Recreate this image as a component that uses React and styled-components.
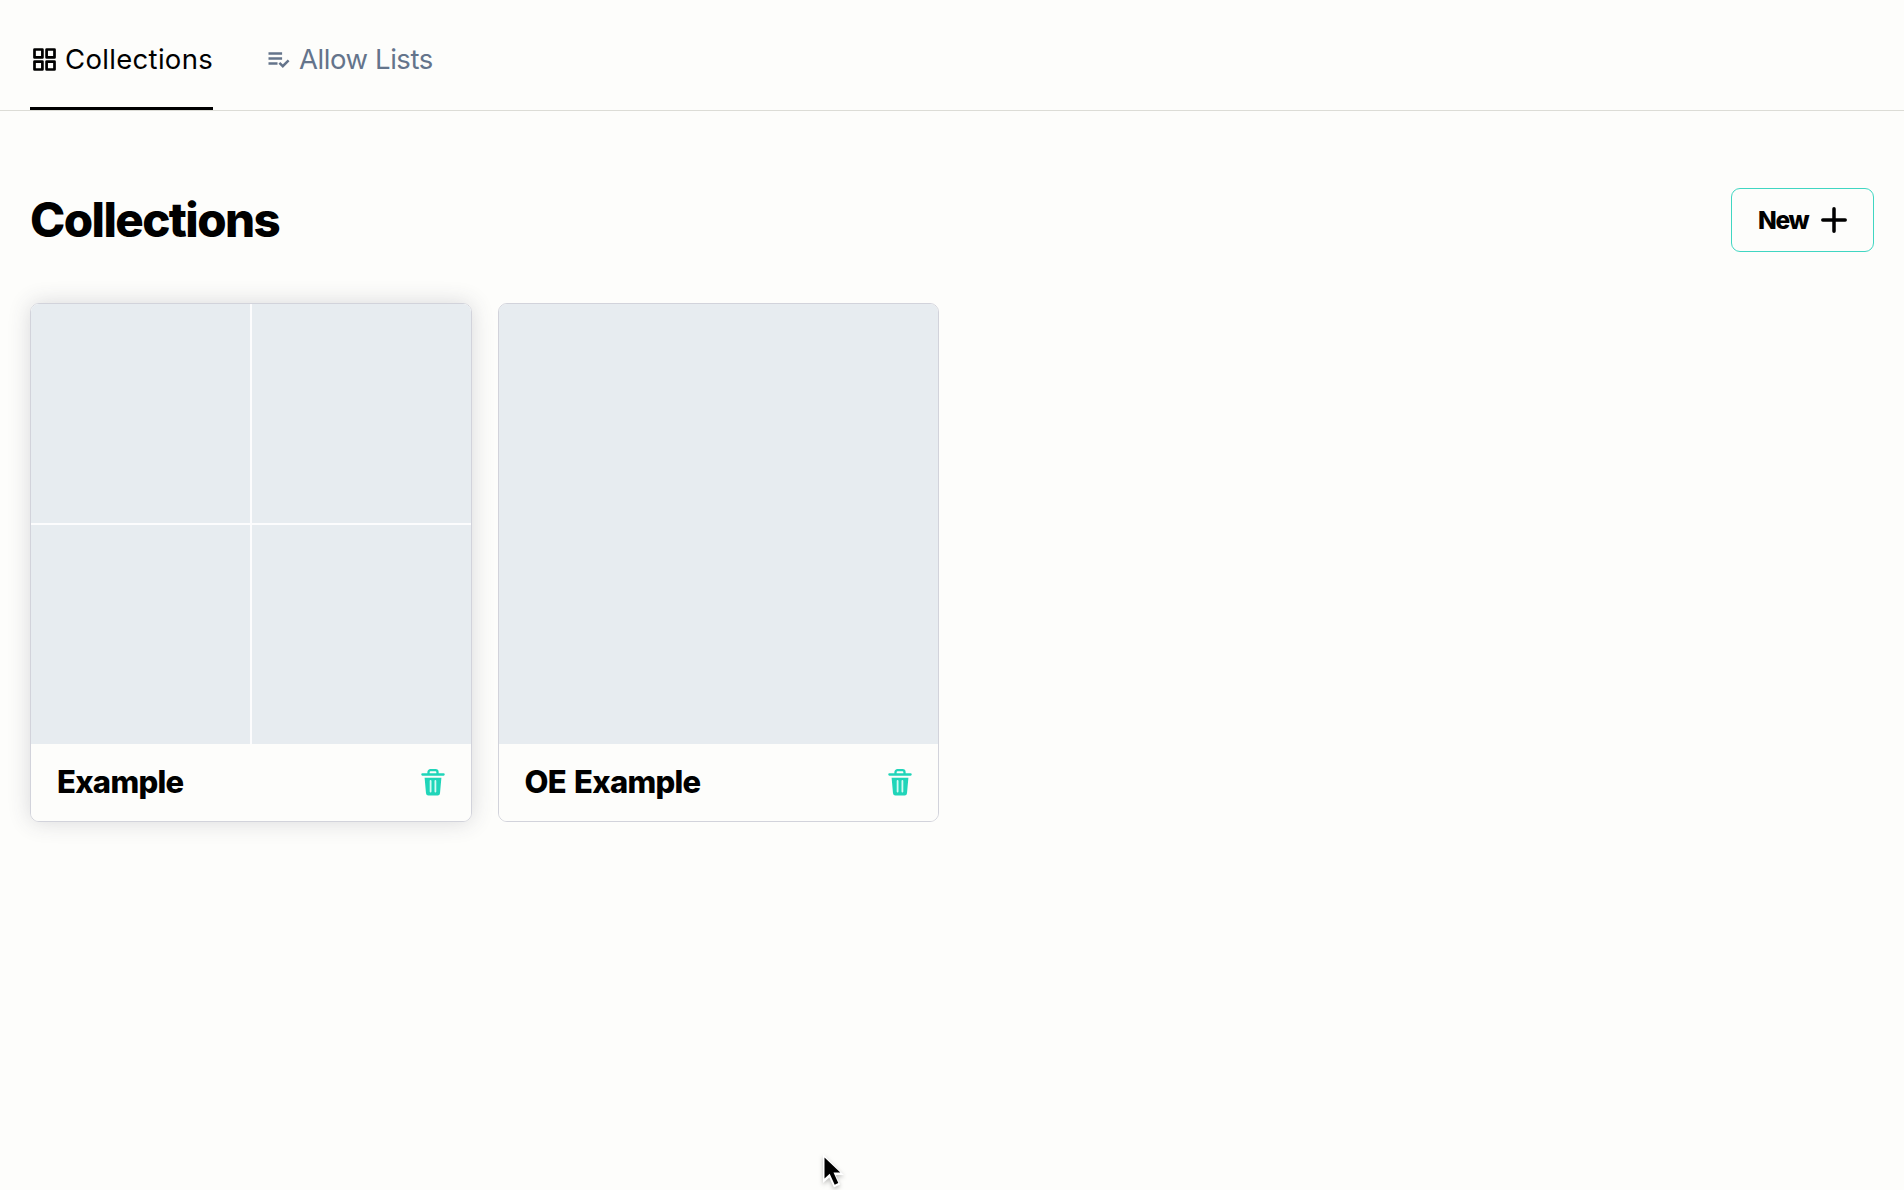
import React from "react";
import styled, { createGlobalStyle } from "styled-components";

const GlobalStyle = createGlobalStyle`
  * { box-sizing: border-box; }
  body {
    margin: 0;
    background: #fdfdfb;
    color: #000;
    font-family: Inter, "Liberation Sans", sans-serif;
    overflow: hidden;
  }
`;

const Page = styled.div`
  min-height: 100vh;
`;

const Nav = styled.nav`
  display: flex;
  gap: 54px;
  height: 111px;
  padding: 0 30px;
  border-bottom: 1px solid #dcdcd6;
`;

const Tab = styled.a`
  display: flex;
  align-items: center;
  gap: 9px;
  width: ${(p) => p.$width}px;
  height: 110px;
  padding: 12px 0 0 ${(p) => (p.$active ? 3 : 1)}px;
  border-bottom: 3px solid ${(p) => (p.$active ? "#000" : "transparent")};
  color: ${(p) => (p.$active ? "#000" : "#64748b")};
  font-size: 27.5px;
  letter-spacing: ${(p) => p.$tracking}px;
  line-height: 34px;
  white-space: nowrap;
  svg { flex: none; }
`;

const TabLabel = styled.span`
  padding-bottom: 2px;
`;

const Main = styled.main`
  padding: 77px 30px 0;
`;

const TitleRow = styled.div`
  display: flex;
  justify-content: space-between;
  align-items: center;
  height: 64px;
`;

const Title = styled.h1`
  margin: 0;
  font-size: 47.5px;
  font-weight: 800;
  line-height: 60px;
  letter-spacing: -1.6px;
`;

const NewButton = styled.button`
  display: flex;
  align-items: center;
  justify-content: space-between;
  width: 143px;
  height: 64px;
  padding: 0 26px 0 26px;
  border: 1.5px solid #40d6c2;
  border-radius: 9px;
  background: transparent;
  color: #000;
  font: 800 24.5px/30px Inter, "Liberation Sans", sans-serif;
  letter-spacing: -1.3px;
`;

const Grid = styled.div`
  display: grid;
  grid-template-columns: repeat(4, 1fr);
  gap: 26px;
  margin-top: 51px;
`;

const Card = styled.article`
  height: 519px;
  border: 1px solid #d2d3db;
  border-radius: 9px;
  overflow: hidden;
  box-shadow: ${(p) => (p.$raised ? "0 0 22px rgba(60, 60, 80, 0.19)" : "none")};
`;

const Preview = styled.div`
  display: grid;
  grid-template-columns: repeat(${(p) => p.$split}, 1fr);
  gap: 2px;
  height: 440px;
  background: #fcfcfd;
`;

const Tile = styled.div`
  background: #e7ecf0;
`;

const CardFooter = styled.div`
  display: flex;
  justify-content: space-between;
  align-items: center;
  height: 77px;
  padding: 0 26px 0 26px;
  background: #fdfdfb;
`;

const CardTitle = styled.h2`
  margin: 0;
  padding-bottom: 1px;
  font-size: 31px;
  font-weight: 800;
  line-height: 40px;
  letter-spacing: -0.7px;
  word-spacing: 2px;
`;

const Pointer = styled.svg`
  position: fixed;
  left: 819px;
  top: 1152px;
  filter: drop-shadow(0 2px 2px rgba(0, 0, 0, 0.25));
`;

const GridIcon = () => (
  <svg width="23" height="23" viewBox="0 0 23 23" fill="none" stroke="currentColor" strokeWidth="2.7" strokeLinejoin="round">
    <rect x="1.5" y="1.5" width="7.9" height="7.9" />
    <rect x="13.6" y="1.5" width="7.9" height="7.9" />
    <rect x="1.5" y="13.6" width="7.9" height="7.9" />
    <rect x="13.6" y="13.6" width="7.9" height="7.9" />
  </svg>
);

const ListCheckIcon = () => (
  <svg width="22" height="18" viewBox="0 0 22 18" fill="none" stroke="currentColor" strokeWidth="2.5">
    <path d="M.5 2.5h13.6M.5 7.5h13.6M.5 12.5h9M11.4 11.8l3.4 3.4 5.8-5.8" />
  </svg>
);

const PlusIcon = () => (
  <svg width="26" height="26" viewBox="0 0 26 26" fill="none" stroke="#000" strokeWidth="3.5" strokeLinecap="round">
    <path d="M13 1.8v22.4M1.8 13h22.4" />
  </svg>
);

const TrashIcon = () => (
  <svg width="24" height="28" viewBox="0 0 24 28" fill="none">
    <path d="M7.5 5V3.2a2 2 0 0 1 2-2h5a2 2 0 0 1 2 2V5M1.4 5.5h21.2" stroke="#20d5b9" strokeWidth="2.3" strokeLinecap="round" />
    <path d="M3.6 8.7h16.8l-1.4 15.6a2.4 2.4 0 0 1-2.4 2.2H7.4a2.4 2.4 0 0 1-2.4-2.2z" fill="#20d5b9" />
    <path d="M9.6 12v10.6M14.4 12v10.6" stroke="#d4fbf3" strokeWidth="1.8" strokeLinecap="round" />
  </svg>
);

const collections = [
  { name: "Example", split: 2, raised: true },
  { name: "OE Example", split: 1, raised: false },
];

export default function App() {
  return (
    <Page>
      <GlobalStyle />
      <Nav>
        <Tab $active $width={183} $tracking={0.32}>
          <GridIcon />
          <TabLabel>Collections</TabLabel>
        </Tab>
        <Tab $width={166} $tracking={-0.42}>
          <ListCheckIcon />
          <TabLabel>Allow Lists</TabLabel>
        </Tab>
      </Nav>
      <Main>
        <TitleRow>
          <Title>Collections</Title>
          <NewButton>
            New
            <PlusIcon />
          </NewButton>
        </TitleRow>
        <Grid>
          {collections.map((item) => (
            <Card key={item.name} $raised={item.raised}>
              <Preview $split={item.split}>
                {Array.from({ length: item.split * item.split }, (_, i) => (
                  <Tile key={i} />
                ))}
              </Preview>
              <CardFooter>
                <CardTitle>{item.name}</CardTitle>
                <TrashIcon />
              </CardFooter>
            </Card>
          ))}
        </Grid>
      </Main>
      <Pointer width="30" height="38" viewBox="0 0 30 38">
        <path d="M4 2v29l6.3-5.6 4.6 10 6.2-2.8-4.5-9.7h8.3z" fill="#fff" />
        <path d="M5.5 5.5v21l5.2-4.8 5 11 3.6-1.6-4.8-10.7h6.8z" fill="#000" />
      </Pointer>
    </Page>
  );
}
